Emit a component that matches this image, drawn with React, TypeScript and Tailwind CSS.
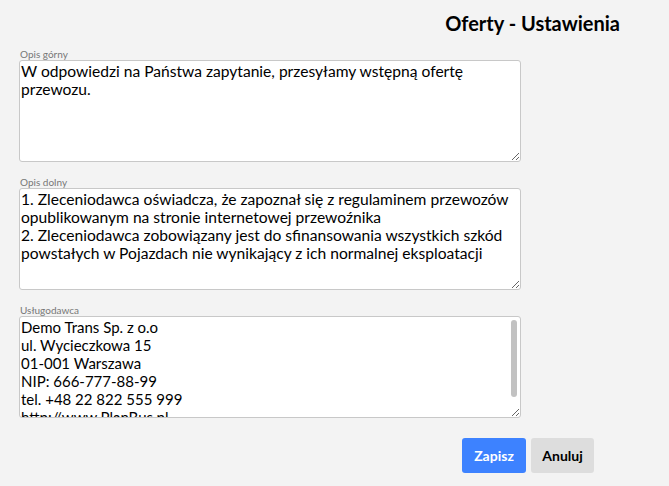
import { useState } from 'react'

const lato = { fontFamily: 'Lato, "Noto Sans", sans-serif' }

function Field({ label, value, onChange, scroll }: { label: string; value: string; onChange: (v: string) => void; scroll?: boolean }) {
  return (
    <div className="flex flex-col">
      <label className="text-[10px] leading-[12px] text-[#777] pl-[1px]">{label}</label>
      <div className="relative w-[502px]">
        <textarea
          value={value}
          onChange={(e) => onChange(e.target.value)}
          className={
            'block w-[502px] h-[102px] bg-white border border-[#c8c8c8] rounded-[3px] p-[1px] leading-[18px] text-black outline-none overflow-hidden ' +
            (scroll ? 'text-[15px] pr-[12px]' : 'text-[15.6px]')
          }
        />
        {scroll && (
          <div className="absolute right-[4px] top-[4px] w-[6px] h-[77px] rounded-full bg-[#c2c2c2]" />
        )}
      </div>
    </div>
  )
}

export default function App() {
  const [top, setTop] = useState('W odpowiedzi na Państwa zapytanie, przesyłamy wstępną ofertę przewozu.')
  const [bottom, setBottom] = useState(
    '1. Zleceniodawca oświadcza, że zapoznał się z regulaminem przewozów opublikowanym na stronie internetowej przewoźnika\n2. Zleceniodawca zobowiązany jest do sfinansowania wszystkich szkód powstałych w Pojazdach nie wynikający z ich normalnej eksploatacji'
  )
  const [provider, setProvider] = useState(
    'Demo Trans Sp. z o.o\nul. Wycieczkowa 15\n01-001 Warszawa\nNIP: 666-777-88-99\ntel. +48 22 822 555 999\nhttp://www.PlanBus.pl\nemail: biuro@planbus.pl'
  )

  return (
    <div className="w-[669px] h-[486px] bg-[#f3f3f3] overflow-hidden" style={lato}>
      <div className="flex justify-end pr-[49px] pt-[11px]">
        <h1 className="text-[20px] leading-[24px] font-bold text-black">Oferty - Ustawienia</h1>
      </div>
      <div className="flex flex-col gap-[14px] pl-[19px] pt-[13px]">
        <Field label="Opis górny" value={top} onChange={setTop} />
        <Field label="Opis dolny" value={bottom} onChange={setBottom} />
        <Field label="Usługodawca" value={provider} onChange={setProvider} scroll />
      </div>
      <div className="flex justify-end gap-[5px] pr-[75px] pt-[20px]">
        <button className="w-[64px] h-[35px] rounded-[3px] bg-[#3d82ff] text-white text-[14px] font-bold">Zapisz</button>
        <button className="w-[63px] h-[35px] rounded-[3px] bg-[#dddddd] text-black text-[14px] font-bold">Anuluj</button>
      </div>
    </div>
  )
}
